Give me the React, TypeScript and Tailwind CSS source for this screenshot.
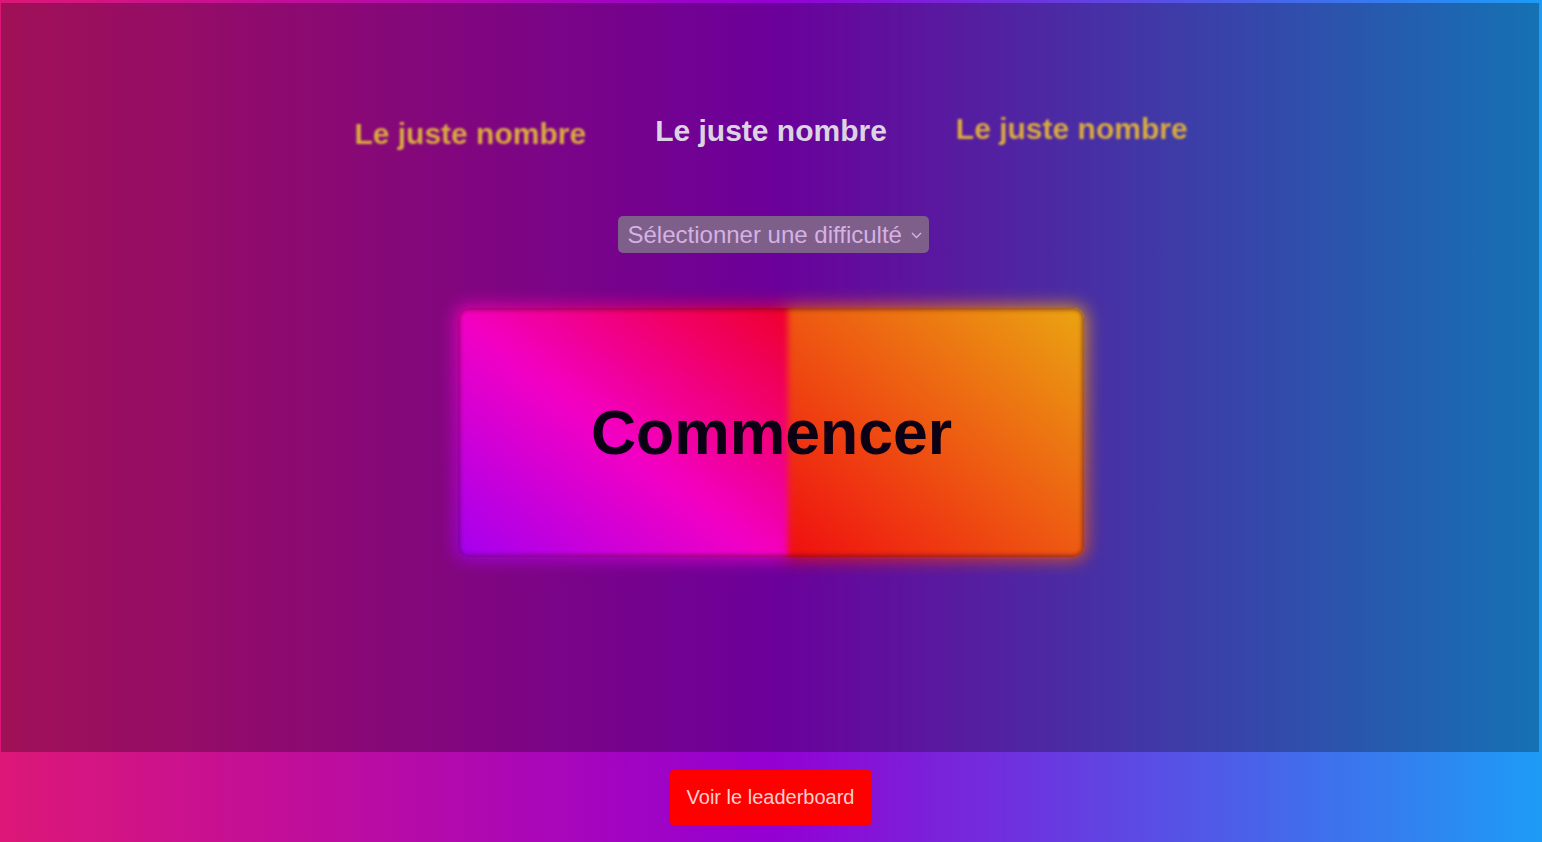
import React from "react";

const leftHalf =
  "bg-[linear-gradient(to_top_right,#a000f0_0%,#f200c4_48%,#f00028_100%)]";
const rightHalf =
  "bg-[linear-gradient(to_top_right,#f00c10_0%,#ee5a12_50%,#eaa812_100%)]";

function StartButton() {
  return (
    <div className="relative w-[626px] h-[249px]">
      {/* glow */}
      <div className="absolute -inset-[2px] flex rounded-[12px] blur-[9px] opacity-90">
        <div className={`w-[330px] h-full rounded-l-[12px] ${leftHalf}`} />
        <div className={`flex-1 h-full rounded-r-[12px] ${rightHalf}`} />
      </div>
      <div className="relative w-full h-full rounded-[10px] overflow-hidden">
        <div className="absolute -inset-[6px] flex blur-[3px]">
          <div className={`w-[336px] h-full ${leftHalf}`} />
          <div className={`flex-1 h-full ${rightHalf}`} />
        </div>
        <div className="absolute inset-0 rounded-[10px] shadow-[inset_0_0_4px_2px_rgba(70,0,40,0.5)]" />
        <div className="absolute inset-0 flex items-center justify-center">
          <span className="font-['Liberation_Sans',Arial,sans-serif] font-bold text-[62.5px] leading-none text-[#0b0014] pl-[1px]">
            Commencer
          </span>
        </div>
      </div>
    </div>
  );
}

export default function App() {
  return (
    <div className="w-[1542px] h-[842px] flex flex-col bg-[linear-gradient(to_right,#dc1777_0%,#9400d3_50%,#1d9cf6_100%)] font-['Liberation_Sans',Arial,sans-serif] overflow-hidden">
      <main className="ml-[1px] mr-[3px] mt-[3px] h-[749px] bg-black/[0.27] flex flex-col items-center">
        <div className="pt-[110px] flex items-start gap-[69px] h-[146px] ml-[2px]">
          <h2 className="mt-[3px] text-[30px] leading-9 font-bold text-[#daaa40] blur-[1px] whitespace-nowrap">
            Le juste nombre
          </h2>
          <h1 className="text-[30px] leading-9 font-bold text-[#dcd4e2] whitespace-nowrap">
            Le juste nombre
          </h1>
          <h2 className="-mt-[2px] text-[30px] leading-9 font-bold text-[#daaa40] blur-[1px] whitespace-nowrap">
            Le juste nombre
          </h2>
        </div>
        <div className="mt-[67px] ml-[6px] w-[311px] h-[37px] rounded-[5px] bg-[#7e5f8a] flex items-center pl-[10px] pr-[7px] text-[24px] leading-none text-[#d6b1e3]">
          <span className="flex-1 whitespace-nowrap">Sélectionner une difficulté</span>
          <svg width="11" height="7" viewBox="0 0 11 7" className="mt-[1px]">
            <path d="M1 1 L5.5 5.5 L10 1" fill="none" stroke="#d6b1e3" strokeWidth="1.4" />
          </svg>
        </div>
        <div className="mt-[55px] ml-[2px]">
          <StartButton />
        </div>
      </main>
      <footer className="flex-1 flex items-center justify-center">
        <button className="w-[202px] h-[55px] rounded-[4px] bg-[#ff0000] text-[20px] text-[#f9cfcf] font-['Liberation_Sans',Arial,sans-serif] ml-[-1px]">
          Voir le leaderboard
        </button>
      </footer>
    </div>
  );
}
